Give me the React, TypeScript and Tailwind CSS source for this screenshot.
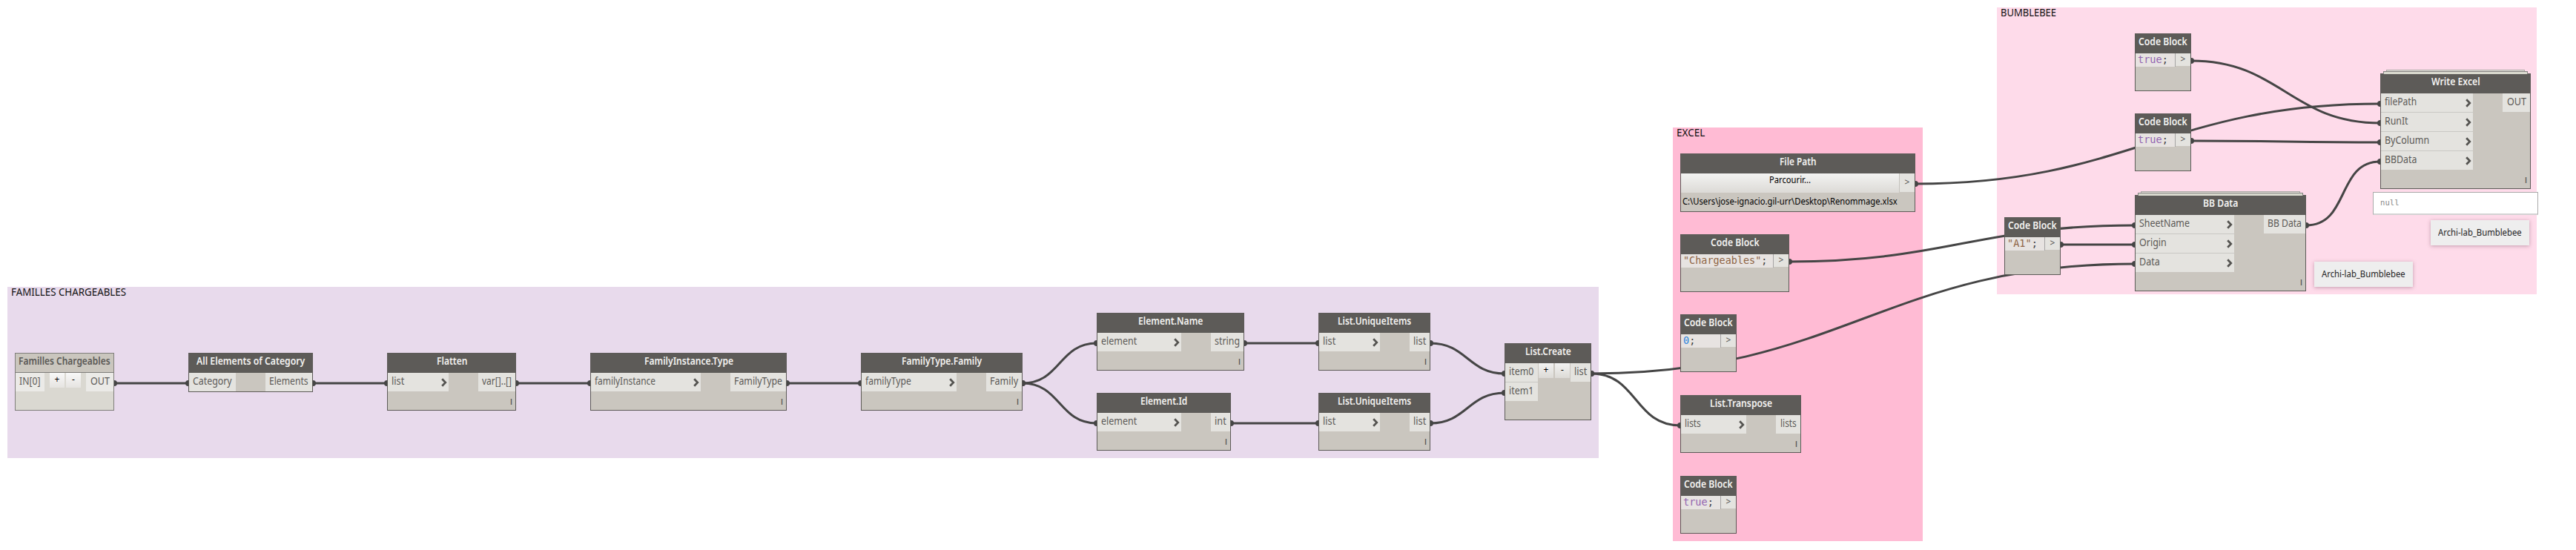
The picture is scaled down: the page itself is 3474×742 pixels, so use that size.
import { useLayoutEffect, useRef, useState } from "react";

const TEXT = "font-['Noto_Sans','Open_Sans',sans-serif]";
const MONO = "font-['DejaVu_Sans_Mono','Liberation_Mono',monospace]";

/** A single line of text squeezed or stretched to an exact width. */
function Fit({ text, w, children }: { text?: string; w: number; children?: React.ReactNode }) {
  const ref = useRef<HTMLSpanElement>(null);
  const [scale, setScale] = useState(1);
  useLayoutEffect(() => {
    if (ref.current && ref.current.offsetWidth) {
      setScale(w / ref.current.offsetWidth);
    }
  }, [w]);
  return (
    <span className="block shrink-0 whitespace-pre" style={{ width: w }}>
      <span ref={ref} className="inline-block origin-left align-top" style={{ transform: `scaleX(${scale})` }}>
        {text ?? children}
      </span>
    </span>
  );
}

type Label = [text: string, width: number];

function Chevron() {
  return (
    <svg className="mr-0.5 mt-[7px] h-[12px] w-[8px]" viewBox="0 0 8 12" fill="none">
      <path d="M1.2 1.2 5.8 6 1.2 10.8" stroke="#545350" strokeWidth="2.7" />
    </svg>
  );
}

interface NodeProps {
  x: number;
  y: number;
  w: number;
  title: Label;
  inputs: Label[];
  inW: number;
  out: Label;
  outW: number;
  chevrons?: boolean;
  lacing?: boolean;
  footer?: boolean;
  counter?: boolean;
  stacked?: boolean;
  faded?: boolean;
}

function CounterButtons({ faded }: { faded?: boolean }) {
  const box = faded
    ? "flex h-5 w-5 justify-center bg-linear-to-b from-[#f8f8f8] to-[#e6e4e1]"
    : "flex h-5 w-5 justify-center bg-linear-to-b from-[#f3f3f2] to-[#dcdad6]";
  return (
    <div className={`${faded ? "gap-0.5" : "gap-0.5"} ${TEXT} flex flex-1 justify-center text-[12px] leading-[18px] text-black`}>
      <span className={box}>+</span>
      <span className={box}>-</span>
    </div>
  );
}

function Stack() {
  return (
    <>
      <div className="absolute -top-[6px] right-[7px] left-[7px] h-[6px] border border-b-0 border-[#a9a8a5] bg-[#e0ddd6]" />
      <div className="absolute -top-[4px] right-[3px] left-[3px] h-[4px] border border-b-0 border-[#858482] bg-[#d9d9ce]" />
    </>
  );
}

function GraphNode(p: NodeProps) {
  const port = p.faded ? "bg-[#ebeae7]" : "bg-[#e4e3df]";
  return (
    <div
      className={`${TEXT} ${p.faded ? "border-[#7f7e7b] bg-[#dad8d1]" : "border-[#5d5b58] bg-[#cac6bf]"} absolute border`}
      style={{ left: p.x, top: p.y, width: p.w }}
    >
      {p.stacked && <Stack />}
      <div
        className={`${p.faded ? "border-b border-[#7f7e7b] bg-[#cac6be] text-[#5b5956]" : "bg-[#5d5b58] text-[#f3f2f0]"} flex h-[26px] justify-center text-[13.5px] leading-5 font-semibold`}
      >
        <Fit text={p.title[0]} w={p.title[1]} />
      </div>
      <div className="flex items-start justify-between text-[13.5px] leading-[22px] text-[#5b5956]">
        <div className="flex flex-col gap-px bg-[#c9c8c4]" style={{ width: p.inW }}>
          {p.inputs.map(([t, w]) => (
            <div key={t} className={`${port} flex h-[25px] justify-between pl-[5px]`}>
              <Fit text={t} w={w} />
              {p.chevrons !== false && <Chevron />}
            </div>
          ))}
        </div>
        {p.counter && <CounterButtons faded={p.faded} />}
        <div className={`${port} flex h-[25px] justify-end pr-[5px]`} style={{ width: p.outW }}>
          <Fit text={p.out[0]} w={p.out[1]} />
        </div>
      </div>
      {p.footer !== false && (
        <div className="flex h-[25px] justify-end pt-[8px] pr-[4px] text-[11px] leading-[12px] font-medium text-[#4c4b48]">
          {p.lacing !== false && "l"}
        </div>
      )}
    </div>
  );
}

function CodeBlock({
  x,
  y,
  w,
  code,
  tone,
  codeW,
}: {
  x: number;
  y: number;
  w: number;
  code: string;
  tone: string;
  codeW: number;
}) {
  return (
    <div className={`${TEXT} absolute h-[78px] border border-[#5d5b58] bg-[#cac6bf]`} style={{ left: x, top: y, width: w }}>
      <div className="flex h-[26px] justify-center bg-[#5d5b58] text-[13.5px] leading-5 font-semibold text-[#f3f2f0]">
        <Fit text="Code Block" w={66} />
      </div>
      <div className="flex items-start">
        <div className={`${MONO} flex h-[18px] flex-1 border-r border-[#a5a4a4] bg-[#e7e3e1] pl-[3px] text-[13.4px] leading-[18px]`}>
          <Fit w={codeW}>
            <span className={tone}>{code}</span>
            <span className="text-[#3f3f3f]">;</span>
          </Fit>
        </div>
        <div className="h-[17px] w-5 bg-[#e4e3df] text-center text-[12px] leading-4 text-[#4f4e4b]">&gt;</div>
      </div>
    </div>
  );
}

function FilePath() {
  return (
    <div className={`${TEXT} absolute top-[207px] left-[2266px] h-[79px] w-[317px] border border-[#5d5b58] bg-[#cac6bf]`}>
      <div className="flex h-[26px] justify-center bg-[#5d5b58] text-[13.5px] leading-5 font-semibold text-[#f3f2f0]">
        <Fit text="File Path" w={50} />
      </div>
      <div className="flex items-start">
        <div className="flex h-[26px] flex-1 justify-center bg-linear-to-b from-[#f3f3f2] to-[#dcdad6] text-[12px] leading-[17px] text-black">
          <Fit text="Parcourir..." w={56} />
        </div>
        <div className="h-[25px] w-[21px] border-l border-[#c4c2bd] bg-[#e4e3df] text-center text-[12px] leading-6 text-[#4f4e4b]">
          &gt;
        </div>
      </div>
      <div className="flex pl-[2px] text-[12px] leading-[23px] text-black">
        <Fit text="C:\Users\jose-ignacio.gil-urr\Desktop\Renommage.xlsx" w={290} />
      </div>
    </div>
  );
}

const GROUPS = [
  { x: 10, y: 387, w: 2146, h: 231, tone: "bg-[#e8daec]", title: ["FAMILLES CHARGEABLES", 155] as Label },
  { x: 2256, y: 172, w: 337, h: 558, tone: "bg-[#ffbbd4]", title: ["EXCEL", 38] as Label },
  { x: 2693, y: 10, w: 728, h: 387, tone: "bg-[#fedbea]", title: ["BUMBLEBEE", 75] as Label },
];

const WIRES: [number, number, number, number][] = [
  [154, 517, 254, 517],
  [422, 517, 522, 517],
  [696, 517, 796, 517],
  [1061, 517, 1161, 517],
  [1379, 517, 1479, 463],
  [1379, 517, 1479, 571],
  [1678, 463, 1778, 463],
  [1660, 571, 1778, 571],
  [1929, 463, 2029, 504],
  [1929, 571, 2029, 530],
  [2146, 504, 2266, 574],
  [2146, 504, 2879, 356],
  [2583, 248, 3210, 140],
  [2413, 353, 2879, 304],
  [2779, 330, 2879, 330],
  [2955, 82, 3210, 166],
  [2955, 190, 3210, 192],
  [3110, 304, 3210, 218],
];

function Wires() {
  return (
    <svg className="absolute inset-0" width="3474" height="742" viewBox="0 0 3474 742" fill="none">
      {WIRES.map(([x0, y0, x1, y1]) => {
        const o = 0.45 * Math.hypot(x1 - x0, y1 - y0);
        return (
          <g key={`${x0}-${y0}-${x1}-${y1}`}>
            <path d={`M${x0} ${y0}C${x0 + o} ${y0} ${x1 - o} ${y1} ${x1} ${y1}`} stroke="#454545" strokeWidth="3" />
            <circle cx={x0} cy={y0} r="4" fill="#454545" />
            <circle cx={x1} cy={y1} r="4" fill="#454545" />
          </g>
        );
      })}
    </svg>
  );
}

const NODES: NodeProps[] = [
  { x: 20, y: 476, w: 134, title: ["Familles Chargeables", 124], inputs: [["IN[0]", 28]], inW: 39, out: ["OUT", 26], outW: 37, chevrons: false, lacing: false, counter: true, faded: true },
  { x: 254, y: 476, w: 168, title: ["All Elements of Category", 146], inputs: [["Category", 53]], inW: 63, out: ["Elements", 53], outW: 63, chevrons: false, footer: false },
  { x: 522, y: 476, w: 174, title: ["Flatten", 41], inputs: [["list", 17]], inW: 82, out: ["var[]..[]", 40], outW: 50 },
  { x: 796, y: 476, w: 265, title: ["FamilyInstance.Type", 120], inputs: [["familyInstance", 82]], inW: 148, out: ["FamilyType", 65], outW: 75 },
  { x: 1161, y: 476, w: 218, title: ["FamilyType.Family", 108], inputs: [["familyType", 62]], inW: 128, out: ["Family", 38], outW: 48 },
  { x: 1479, y: 422, w: 199, title: ["Element.Name", 87], inputs: [["element", 48]], inW: 113, out: ["string", 34], outW: 44 },
  { x: 1479, y: 530, w: 181, title: ["Element.Id", 63], inputs: [["element", 48]], inW: 113, out: ["int", 16], outW: 26 },
  { x: 1778, y: 422, w: 151, title: ["List.UniqueItems", 99], inputs: [["list", 17]], inW: 82, out: ["list", 17], outW: 27 },
  { x: 1778, y: 530, w: 151, title: ["List.UniqueItems", 99], inputs: [["list", 17]], inW: 82, out: ["list", 17], outW: 27 },
  { x: 2029, y: 463, w: 117, title: ["List.Create", 62], inputs: [["item0", 33], ["item1", 33]], inW: 44, out: ["list", 17], outW: 27, chevrons: false, lacing: false, counter: true },
  { x: 2266, y: 533, w: 163, title: ["List.Transpose", 84], inputs: [["lists", 22]], inW: 88, out: ["lists", 22], outW: 33 },
  { x: 2879, y: 263, w: 231, title: ["BB Data", 47], inputs: [["SheetName", 68], ["Origin", 37], ["Data", 28]], inW: 133, out: ["BB Data", 46], outW: 56, stacked: true },
  { x: 3210, y: 99, w: 203, title: ["Write Excel", 66], inputs: [["filePath", 43], ["RunIt", 32], ["ByColumn", 60], ["BBData", 43]], inW: 124, out: ["OUT", 26], outW: 37, stacked: true },
];

export default function App() {
  return (
    <main className={`${TEXT} relative h-[742px] w-[3474px] overflow-hidden bg-white`}>
      {GROUPS.map((g) => (
        <section
          key={g.title[0]}
          className={`${g.tone} absolute pl-[5px] text-[13.5px] leading-[14px] text-[#111]`}
          style={{ left: g.x, top: g.y, width: g.w, height: g.h }}
        >
          <Fit text={g.title[0]} w={g.title[1]} />
        </section>
      ))}
      <Wires />
      {NODES.map((n) => (
        <GraphNode key={`${n.x}-${n.y}`} {...n} />
      ))}
      <FilePath />
      <CodeBlock x={2266} y={316} w={147} code={'"Chargeables"'} tone="text-[#8f6545]" codeW={113.5} />
      <CodeBlock x={2266} y={424} w={76} code="0" tone="text-[#2e85dd]" codeW={16.2} />
      <CodeBlock x={2266} y={642} w={76} code="true" tone="text-[#9264b0]" codeW={40.5} />
      <CodeBlock x={2879} y={45} w={76} code="true" tone="text-[#9264b0]" codeW={40.5} />
      <CodeBlock x={2879} y={153} w={76} code="true" tone="text-[#9264b0]" codeW={40.5} />
      <CodeBlock x={2703} y={293} w={76} code={'"A1"'} tone="text-[#8f6545]" codeW={40.5} />
      <div className={`${MONO} absolute top-[259px] left-[3200px] flex h-[31px] w-[223px] border border-b-2 border-[#aaaaaa] border-b-[#d3d3d3] bg-white pt-1.5 pl-[9px] text-[11px] leading-[15px] text-[#8a8a8a]`}>
        <Fit text="null" w={26} />
      </div>
      <div className="absolute top-[297px] left-[3278px] flex h-[34px] w-[133px] items-center justify-center bg-[#eeeeee] text-[12px] text-[#222] shadow-[0_1px_5px_rgba(90,40,60,0.35)]">
        <Fit text="Archi-lab_Bumblebee" w={113} />
      </div>
      <div className="absolute top-[353px] left-[3121px] flex h-[34px] w-[133px] items-center justify-center bg-[#eeeeee] text-[12px] text-[#222] shadow-[0_1px_5px_rgba(90,40,60,0.35)]">
        <Fit text="Archi-lab_Bumblebee" w={113} />
      </div>
    </main>
  );
}
